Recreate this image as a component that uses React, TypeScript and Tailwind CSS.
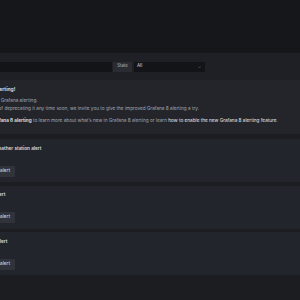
import React from 'react';

const alerts = [
  { id: 'a1', name: 'Weather station alert' },
  { id: 'a2', name: 'Disk usage alert' },
  { id: 'a3', name: 'Memory alert' },
];

export default function App() {
  return (
    <div
      className="w-[300px] h-[300px] overflow-hidden bg-[#1b1d21] text-[#ccccdc]"
      style={{ fontFamily: 'Inter, "Liberation Sans", sans-serif' }}
    >
      <div className="h-[53px] bg-[#16171b]" />

      {/* filter bar */}
      <div className="h-[27px] bg-[#1e2025] flex items-center">
        <div className="w-[112px] h-[10px] bg-[#131418]" />
        <div className="ml-px w-[19px] h-[10px] bg-[#2a2c32] flex items-center justify-center text-[4.3px] text-[#b4b6bd]">
          State
        </div>
        <div className="ml-[2px] w-[71px] h-[10px] bg-[#131418] flex items-center justify-between pl-[3px] pr-[4px] text-[4.5px]">
          <span className="text-[#d8d9e0]">All</span>
          <span className="text-[#7b7d85] text-[4px]">⌄</span>
        </div>
      </div>

      {/* deprecation notice */}
      <div className="bg-[#23252b] h-[54px] pt-[5px] -ml-[55px] whitespace-nowrap">
        <div className="ml-[1.5px] text-[5px] leading-[8px] font-semibold text-[#e4e5ea]">
          Switch to Grafana 8 alerting!
        </div>
        <div className="mt-[2.5px] text-[4.7px] leading-[8.5px] text-[#a4a6ae]">
          You are using the legacy Grafana alerting.
        </div>
        <div className="text-[4.7px] leading-[8.5px] text-[#a4a6ae]">
          While we have no plans of deprecating it any time soon, we invite you to give the improved Grafana 8 alerting a try.
        </div>
        <div className="mt-[3px] -ml-[3px] text-[4.7px] leading-[8.5px] text-[#a4a6ae]">
          See <span className="font-semibold text-[#e4e5ea]">What’s New with Grafana 8 alerting</span> to learn more about what’s new in Grafana 8 alerting or learn{' '}
          <span className="text-[#e4e5ea]">how to enable the new Grafana 8 alerting feature</span>.
        </div>
      </div>

      {/* alert list */}
      <div className="mt-[5px] flex flex-col gap-[3.5px]">
        {alerts.map((a, i) => (
          <div key={a.id} className="h-[43px] bg-[#22252c] pt-[4.5px] whitespace-nowrap">
            <div
              className={`text-[4.7px] leading-[8px] font-semibold text-[#dcdde3] ${
                i === 0 ? '-ml-[6px]' : i === 1 ? '-ml-[31px]' : '-ml-[23px]'
              }`}
            >
              {a.name}
            </div>
            <div className="mt-[14px] -ml-[12px] w-[27px] h-[11px] rounded-[1px] bg-[#30333a] flex items-center justify-end pr-[5px] text-[4.6px] font-medium text-[#d0d1d8]">
              Edit alert
            </div>
          </div>
        ))}
      </div>
    </div>
  );
}
